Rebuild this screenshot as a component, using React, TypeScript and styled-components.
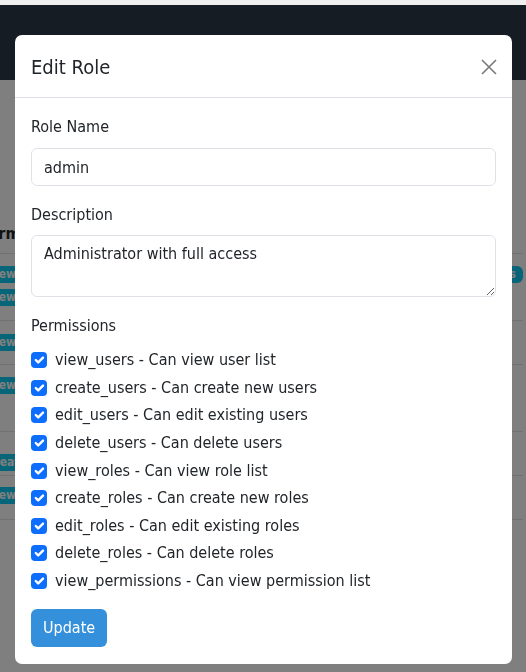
import styled, { createGlobalStyle } from 'styled-components';

const FONT = `"DejaVu Sans Condensed", Lato, "Liberation Sans", sans-serif`;

const GlobalStyle = createGlobalStyle`
  html, body {
    margin: 0;
    padding: 0;
  }
  body {
    font-family: ${FONT};
    font-size: 16px;
    line-height: 1.5;
    color: #212529;
    background: #fff;
    overflow: hidden;
  }
  * {
    box-sizing: border-box;
  }
`;

const permissions: [string, string][] = [
  ['view_users', 'Can view user list'],
  ['create_users', 'Can create new users'],
  ['edit_users', 'Can edit existing users'],
  ['delete_users', 'Can delete users'],
  ['view_roles', 'Can view role list'],
  ['create_roles', 'Can create new roles'],
  ['edit_roles', 'Can edit existing roles'],
  ['delete_roles', 'Can delete roles'],
  ['view_permissions', 'Can view permission list'],
];

// rows of the roles table that sits behind the modal
const tableRows = [
  { badges: ['view_users', 'view_roles'], side: 'edit_users', height: 67, pad: 12 },
  { badges: ['view_users'], side: '', height: 44, pad: 13 },
  { badges: ['view_roles'], side: '', height: 67, pad: 12 },
  { badges: ['create_roles'], side: '', height: 44, pad: 22 },
  { badges: ['view_users'], side: '', height: 44, pad: 11 },
];

const Check = () => (
  <CheckBox>
    <svg width="16" height="16" viewBox="0 0 20 20">
      <path
        d="M6 10l3 3l6-6"
        fill="none"
        stroke="#fff"
        strokeWidth="3"
        strokeLinecap="round"
        strokeLinejoin="round"
      />
    </svg>
  </CheckBox>
);

const App = () => {
  return (
    <>
      <GlobalStyle />
      <Page>
        <TopStrip />
        <Navbar />
        <Content>
          <Table>
            <HeadRow>
              <HeadCell>Permissions</HeadCell>
              <HeadCell />
              <HeadCell />
            </HeadRow>
            {tableRows.map((row, i) => (
              <Row key={i} $height={row.height}>
                <Cell $pad={row.pad}>
                  {row.badges.map((b) => (
                    <Badge key={b}>{b}</Badge>
                  ))}
                </Cell>
                <Cell $pad={row.pad} />
                <SideCell $pad={row.pad}>{row.side && <Badge>{row.side}</Badge>}</SideCell>
              </Row>
            ))}
          </Table>
        </Content>
      </Page>

      <Backdrop />
      <ModalWrap>
        <Dialog>
          <Header>
            <Title>Edit Role</Title>
            <CloseButton aria-label="Close">
              <svg width="16" height="16" viewBox="0 0 16 16">
                <path d="M1 1L15 15M15 1L1 15" stroke="#7a7a7a" strokeWidth="1.6" />
              </svg>
            </CloseButton>
          </Header>
          <Body>
            <Field>
              <Label>Role Name</Label>
              <Input defaultValue="admin" />
            </Field>
            <Field>
              <Label>Description</Label>
              <TextArea rows={2} defaultValue="Administrator with full access" />
            </Field>
            <PermLabel>Permissions</PermLabel>
            <PermList>
              {permissions.map(([name, desc]) => (
                <PermRow key={name}>
                  <Check />
                  <span>
                    {name} - {desc}
                  </span>
                </PermRow>
              ))}
            </PermList>
            <UpdateButton>Update</UpdateButton>
          </Body>
        </Dialog>
      </ModalWrap>
    </>
  );
};

export default App;

const Page = styled.div`
  display: flex;
  flex-direction: column;
  min-height: 672px;
`;

const TopStrip = styled.div`
  height: 5px;
  background: #efefef;
`;

const Navbar = styled.nav`
  height: 75px;
  background: #2a3848;
`;

const Content = styled.main`
  padding-top: 134px;
  overflow: hidden;
`;

const Table = styled.div`
  display: grid;
  grid-template-columns: 45px 1fr 40px;
  margin-left: -30px;
  margin-right: 3px;
`;

const HeadRow = styled.div`
  display: contents;
`;

const HeadCell = styled.div`
  height: 40px;
  padding: 8px;
  font-weight: 700;
  white-space: nowrap;
  overflow: hidden;
  border-bottom: 1px solid #dee2e6;
`;

const Row = styled.div<{ $height: number }>`
  display: contents;
  & > div {
    height: ${(p) => p.$height}px;
  }
`;

const Cell = styled.div<{ $pad: number }>`
  display: flex;
  flex-direction: column;
  align-items: flex-start;
  gap: 6px;
  overflow: hidden;
  padding: ${(p) => p.$pad}px 0 0 11px;
  border-bottom: 1px solid #dee2e6;
`;

const SideCell = styled(Cell)`
  align-items: flex-end;
  padding-left: 0;
`;

const Badge = styled.span`
  display: inline-block;
  flex-shrink: 0;
  padding: 2px 7px;
  border-radius: 6px;
  background: #0dcaf0;
  color: #fff;
  font-size: 12px;
  font-weight: 700;
  line-height: 13px;
  white-space: nowrap;
`;

const Backdrop = styled.div`
  position: fixed;
  top: 5px;
  left: 0;
  right: 0;
  bottom: 0;
  background: rgba(0, 0, 0, 0.5);
`;

const ModalWrap = styled.div`
  position: fixed;
  inset: 0;
  display: flex;
  align-items: flex-start;
  padding: 35px 14px 0 15px;
`;

const Dialog = styled.div`
  width: 497px;
  background: #fff;
  border-radius: 7px;
  overflow: hidden;
`;

const Header = styled.div`
  display: flex;
  align-items: center;
  justify-content: space-between;
  height: 63px;
  padding: 1px 15px 0 16px;
  border-bottom: 1px solid #dee2e6;
`;

const Title = styled.h5`
  margin: 0;
  font-size: 20px;
  font-weight: 500;
  line-height: 30px;
`;

const CloseButton = styled.button`
  display: flex;
  align-items: center;
  justify-content: center;
  width: 16px;
  height: 16px;
  padding: 0;
  border: 0;
  background: transparent;
`;

const Body = styled.div`
  display: flex;
  flex-direction: column;
  align-items: flex-start;
  padding: 17px 16px 17px;
`;

const Field = styled.div`
  display: flex;
  flex-direction: column;
  width: 100%;
  margin-bottom: 17px;
`;

const Label = styled.label`
  line-height: 24px;
  margin-bottom: 9px;
  & + textarea {
    margin-top: -1px;
  }
`;

const Input = styled.input`
  width: 100%;
  height: 38px;
  padding: 6px 12px;
  border: 1px solid #dee2e6;
  border-radius: 6px;
  font: inherit;
  color: #212529;
  background: #fff;
  outline: none;
`;

const TextArea = styled.textarea`
  width: 100%;
  height: 62px;
  padding: 6px 12px;
  border: 1px solid #dee2e6;
  border-radius: 6px;
  font: inherit;
  color: #212529;
  resize: vertical;
  outline: none;
`;

const PermLabel = styled.div`
  line-height: 24px;
  margin-bottom: 8.5px;
`;

const PermList = styled.div`
  display: flex;
  flex-direction: column;
  width: 100%;
  margin-bottom: 14.1px;
`;

const PermRow = styled.label`
  display: flex;
  align-items: center;
  gap: 8px;
  height: 27.6px;
`;

const CheckBox = styled.span`
  display: flex;
  flex-shrink: 0;
  width: 16px;
  height: 16px;
  border-radius: 4px;
  background: #0d6efd;
`;

const UpdateButton = styled.button`
  height: 38px;
  padding: 6px 12px;
  border: 0;
  border-radius: 6px;
  background: #3590dc;
  color: #fff;
  font: inherit;
`;
